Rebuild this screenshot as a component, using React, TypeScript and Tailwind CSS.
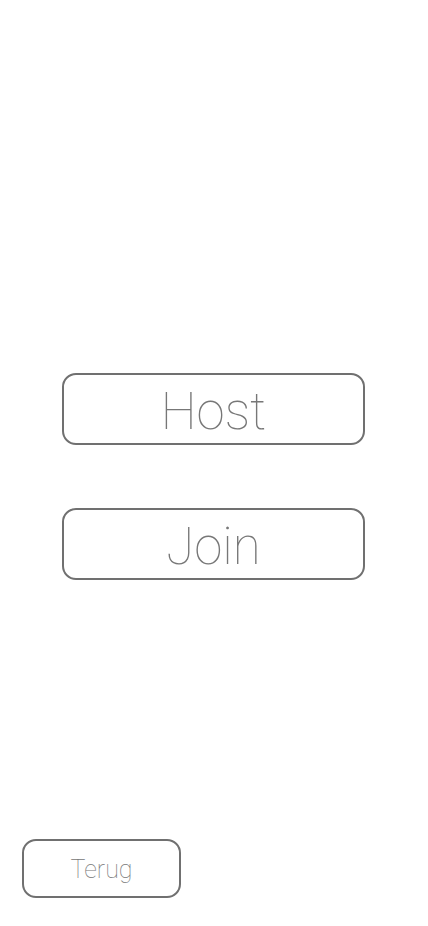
export default function App() {
  return (
    <div className="flex h-[926px] w-full flex-col bg-white font-['Roboto',sans-serif]">
      <div className="ml-[62px] mr-[63px] mt-[373px] flex flex-col gap-[63px]">
        <button className="flex h-[72px] w-full items-center justify-center rounded-[14px] border-2 border-[#707070] pt-[6px] text-[51px] font-thin text-[#777777]">
          Host
        </button>
        <button className="flex h-[72px] w-full items-center justify-center rounded-[14px] border-2 border-[#707070] pt-[6px] text-[51px] font-thin text-[#777777]">
          Join
        </button>
      </div>
      <button className="mb-[28px] ml-[22px] mt-auto flex h-[59px] w-[159px] items-center justify-center rounded-[14px] border-2 border-[#707070] pt-[3px] text-[25px] font-thin text-[#777777]">
        Terug
      </button>
    </div>
  );
}
